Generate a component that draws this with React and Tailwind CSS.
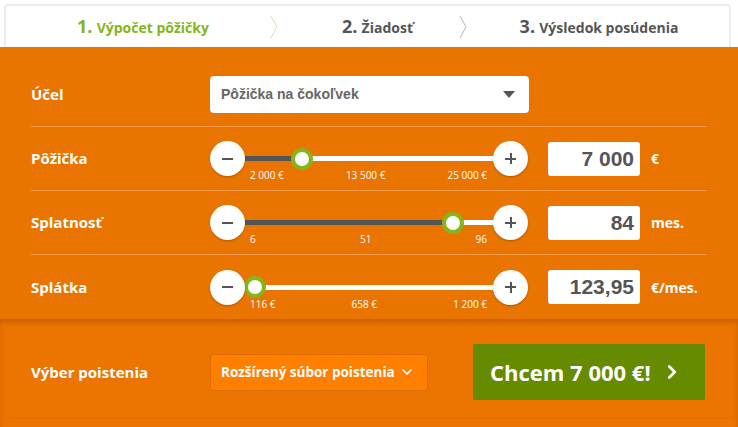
import { ChevronDown, ChevronRight } from 'lucide-react';

const sliders = [
  { label: 'Pôžička', thumb: 57, value: '7 000', unit: '€', marks: ['2 000 €', '13 500 €', '25 000 €'] },
  { label: 'Splatnosť', thumb: 208, value: '84', unit: 'mes.', marks: ['6', '51', '96'] },
  { label: 'Splátka', thumb: 10, value: '123,95', unit: '€/mes.', marks: ['116 €', '658 €', '1 200 €'] },
];

const RoundButton = ({ plus }) => (
  <div className="relative z-10 flex h-[35px] w-[35px] shrink-0 items-center justify-center rounded-full bg-white shadow-[0_1px_2px_rgba(0,0,0,0.25)]">
    <div className="absolute h-[2px] w-[11px] bg-[#555]" />
    {plus && <div className="absolute h-[11px] w-[2px] bg-[#555]" />}
  </div>
);

const Separator = ({ color }) => (
  <svg width="8" height="24" viewBox="0 0 8 24" className="shrink-0">
    <polyline points="1,1 7,12 1,23" fill="none" stroke={color} strokeWidth="1" />
  </svg>
);

const SliderRow = ({ item, last }) => (
  <div className={`flex h-16 items-center ${last ? '' : 'border-b border-[#f39b4a]'}`}>
    <div className="w-[179px] text-[15px] font-bold text-white">{item.label}</div>
    <div className="flex items-center">
      <RoundButton />
      <div className="relative h-[5px] w-[248px] bg-white">
        <div className="absolute left-0 top-0 h-full bg-[#555]" style={{ width: item.thumb }} />
        <div
          className="absolute top-1/2 h-[22px] w-[22px] -translate-x-1/2 -translate-y-1/2 rounded-full border-[4px] border-[#86b51a] bg-white"
          style={{ left: item.thumb }}
        />
        <div className="absolute left-[5px] right-[6px] top-[14px] flex justify-between text-[10px] leading-none text-white">
          {item.marks.map((m) => (
            <span key={m}>{m}</span>
          ))}
        </div>
      </div>
      <RoundButton plus />
    </div>
    <div className="ml-5 flex h-[34px] w-[92px] items-center justify-end rounded-[3px] bg-white pr-[6px] font-['Liberation_Sans',sans-serif] text-[21px] font-bold text-[#555]">
      {item.value}
    </div>
    <div className="ml-[11px] text-[14px] font-bold text-white">{item.unit}</div>
  </div>
);

export default function App() {
  return (
    <div className="h-[427px] w-[738px] overflow-hidden bg-white font-['Open_Sans',sans-serif]">
      {/* steps */}
      <div className="ml-[4px] mr-[7px] mt-[4px] flex h-[43px] items-center rounded-t-[4px] border-x-2 border-t-2 border-[#ececec] bg-white">
        <div className="flex w-[272px] items-center">
          <div className="flex-1 pl-[10px] text-center text-[#86b51a] font-bold">
            <span className="text-[18px]">1.</span> <span className="text-[14px]">Výpočet pôžičky</span>
          </div>
          <Separator color="#e8d8b0" />
        </div>
        <div className="flex w-[189px] items-center">
          <div className="flex-1 pl-[18px] text-center font-bold text-[#555]">
            <span className="text-[18px]">2.</span> <span className="text-[14px]">Žiadosť</span>
          </div>
          <Separator color="#b5b5b5" />
        </div>
        <div className="flex-1 pl-[2px] text-center font-bold text-[#555]">
          <span className="text-[18px]">3.</span> <span className="text-[14px]">Výsledok posúdenia</span>
        </div>
      </div>

      {/* calculator */}
      <div className="bg-[#ea7400] px-[31px] pt-4">
        <div className="flex h-16 items-center border-b border-[#f39b4a]">
          <div className="w-[179px] text-[15px] font-bold text-white">Účel</div>
          <div className="flex h-[37px] w-[319px] items-center justify-between rounded-[4px] bg-white pl-[11px] pr-[14px] font-['Liberation_Sans',sans-serif] text-[14px] font-bold text-[#666]">
            <span>Pôžička na čokoľvek</span>
            <svg width="12" height="7" viewBox="0 0 12 7">
              <polygon points="0,0 12,0 6,7" fill="#555" />
            </svg>
          </div>
        </div>
        {sliders.map((item, i) => (
          <SliderRow key={item.label} item={item} last={i === sliders.length - 1} />
        ))}
      </div>

      {/* insurance + submit */}
      <div className="h-[109px] bg-[#ec7502] px-[3px] pt-[6px] shadow-[inset_0_4px_4px_rgba(150,60,0,0.35)]">
        <div className="flex h-[94px] items-center rounded-[6px] border border-[#e26f00] pl-[27px] pr-[29px]">
          <div className="w-[179px] text-[15px] font-bold text-white">Výber poistenia</div>
          <div className="flex h-[37px] w-[218px] items-center justify-between rounded-[3px] border border-[#e06c00] bg-[#ff8000] pl-[10px] pr-[12px] text-[13.5px] font-bold text-white">
            <span>Rozšírený súbor poistenia</span>
            <ChevronDown size={16} strokeWidth={2.5} />
          </div>
          <div className="ml-auto flex h-[56px] w-[232px] items-center rounded-[2px] bg-[#668a00] pl-[17px] text-[22px] font-bold text-white">
            <span>Chcem 7 000 €!</span>
            <ChevronRight size={22} strokeWidth={3} className="ml-[10px]" />
          </div>
        </div>
      </div>
    </div>
  );
}
